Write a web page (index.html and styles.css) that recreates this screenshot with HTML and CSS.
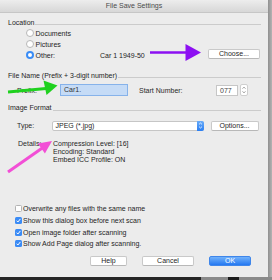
FILE: index.html
```html
<!DOCTYPE html>
<html>
<head>
<meta charset="utf-8">
<title>File Save Settings</title>
<link rel="stylesheet" href="styles.css">
</head>
<body>
<div class="screen">
  <div class="window">
    <div class="titlebar">File Save Settings</div>
    <div class="content">
      <section class="group">
        <div class="group-head"><span>Location</span><i class="rule"></i></div>
        <div class="radios">
          <div class="radio-row"><span class="radio"></span><span>Documents</span></div>
          <div class="radio-row"><span class="radio"></span><span>Pictures</span></div>
          <div class="radio-row"><span class="radio on"></span><span class="other-label">Other:</span><span class="path">Car 1 1949-50</span><button class="btn choose">Choose...</button></div>
        </div>
      </section>

      <section class="group filename">
        <div class="group-head"><span>File Name (Prefix + 3-digit number)</span><i class="rule"></i></div>
        <div class="prefix-row">
          <span class="field-label prefix-label">Prefix:</span>
          <span class="input prefix-input">Car1.</span>
          <span class="field-label start-label">Start Number:</span>
          <span class="input start-input">077</span>
          <span class="stepper"><svg width="6" height="10" viewBox="0 0 6 10"><path d="M1.6 3.6 L3 2.2 L4.4 3.6 M1.6 6.4 L3 7.8 L4.4 6.4" fill="none" stroke="#666" stroke-width="0.7"/></svg></span>
        </div>
      </section>

      <section class="group format">
        <div class="group-head"><span>Image Format</span><i class="rule"></i></div>
        <div class="type-row">
          <span class="field-label type-label">Type:</span>
          <span class="select"><span class="select-text">JPEG (*.jpg)</span><span class="select-arrows"><svg width="7" height="9" viewBox="0 0 7 9"><path d="M2 3.4 L3.5 2 L5 3.4 M2 5.6 L3.5 7 L5 5.6" fill="none" stroke="#fff" stroke-width="0.8"/></svg></span></span>
          <button class="btn options">Options...</button>
        </div>
        <div class="details-row">
          <span class="field-label details-label">Details:</span>
          <div class="details-text">
            <div>Compression Level: [16]</div>
            <div>Encoding: Standard</div>
            <div>Embed ICC Profile: ON</div>
          </div>
        </div>
      </section>

      <section class="checks">
        <div class="check-row"><span class="check"></span><span>Overwrite any files with the same name</span></div>
        <div class="check-row"><span class="check on"><svg width="7" height="7" viewBox="0 0 7 7"><path d="M1.6 3.7 L2.9 5 L5.4 1.9" fill="none" stroke="#fff" stroke-width="1"/></svg></span><span>Show this dialog box before next scan</span></div>
        <div class="check-row"><span class="check on"><svg width="7" height="7" viewBox="0 0 7 7"><path d="M1.6 3.7 L2.9 5 L5.4 1.9" fill="none" stroke="#fff" stroke-width="1"/></svg></span><span>Open image folder after scanning</span></div>
        <div class="check-row"><span class="check on"><svg width="7" height="7" viewBox="0 0 7 7"><path d="M1.6 3.7 L2.9 5 L5.4 1.9" fill="none" stroke="#fff" stroke-width="1"/></svg></span><span>Show Add Page dialog after scanning.</span></div>
      </section>

      <div class="buttons">
        <button class="btn help">Help</button>
        <button class="btn cancel">Cancel</button>
        <button class="btn ok">OK</button>
      </div>
    </div>

    <svg class="annotations" width="268" height="277" viewBox="0 0 268 277">
      <line x1="150" y1="52.5" x2="188" y2="52.5" stroke="#8d10f2" stroke-width="2.6"/>
      <polygon points="185.5,44 201,52.5 185.5,61" fill="#8d10f2"/>
      <line x1="8" y1="92" x2="46" y2="88.6" stroke="#1fd11f" stroke-width="3"/>
      <polygon points="43.5,80.5 57.5,85.5 46.5,95" fill="#1fd11f"/>
      <line x1="8" y1="172" x2="43" y2="147.5" stroke="#f24fd6" stroke-width="3"/>
      <polygon points="37.9,143.6 52,141 44.9,153.4" fill="#f24fd6"/>
    </svg>
  </div>
  <div class="shade-right"></div>
</div>
<div class="shade-bottom"></div>
</body>
</html>
```

FILE: styles.css
```css
html, body {
  margin: 0;
  padding: 0;
}
body {
  width: 272px;
  height: 280px;
  overflow: hidden;
  font-family: "Liberation Sans", Arial, sans-serif;
  font-size: 7px;
  color: #1e1e1e;
  background: #9c9c9c;
}
.screen {
  display: flex;
  height: 277px;
}
.window {
  position: relative;
  width: 268px;
  height: 277px;
  background: #ececec;
  flex: none;
}
.shade-right {
  flex: 1;
  background: linear-gradient(to right, #8f8f8f, #b4b4b4);
}
.shade-bottom {
  height: 3px;
  background: linear-gradient(to right, #262626 0, #262626 74%, #8a8a8a 74%, #8a8a8a 84%, #1c1c1c 84%, #1c1c1c 88%, #8a8a8a 88%);
}
.titlebar {
  height: 12px;
  line-height: 12px;
  text-align: center;
  color: #4b4b4b;
  background: linear-gradient(#ededed, #d7d7d7);
  border-bottom: 1px solid #c6c6c6;
}
.content {
  padding: 5.5px 7px 0 8px;
}
.group-head {
  display: flex;
  height: 8px;
  line-height: 8px;
  white-space: nowrap;
}
.rule {
  flex: 1;
  align-self: flex-end;
  margin: 0 0 1.5px 1px;
  border-bottom: 1px solid #cbcbcb;
}
.radios {
  margin-top: 1px;
  padding-left: 18px;
}
.radio-row {
  display: flex;
  align-items: center;
  height: 11px;
}
.radio {
  box-sizing: border-box;
  width: 8px;
  height: 8px;
  margin-right: 1.5px;
  border-radius: 50%;
  background: #fff;
  border: 1px solid #b7b7b7;
  flex: none;
}
.radio.on {
  border: 2.4px solid #3a8cf6;
  background: #fff;
}
.other-label {
  width: 64.5px;
}
.path {
  flex: 1;
}
.btn {
  box-sizing: border-box;
  height: 10px;
  padding: 0;
  font-family: inherit;
  font-size: 7px;
  line-height: 8px;
  color: #1e1e1e;
  background: #fff;
  border: 1px solid #c9c9c9;
  border-bottom-color: #b8b8b8;
  border-radius: 2px;
  text-align: center;
}
.choose {
  width: 52px;
  margin: -2.5px 1px 0 0;
}
.filename {
  margin-top: 11px;
}
.prefix-row {
  display: flex;
  align-items: center;
  height: 12px;
  margin-top: 4.5px;
  padding-left: 9px;
}
.field-label {
  color: #2a2a2a;
}
.prefix-label {
  width: 43px;
}
.input {
  box-sizing: border-box;
  height: 12px;
  line-height: 10px;
  padding-left: 3px;
  border: 1px solid #c6c6c6;
  background: #fff;
}
.prefix-input {
  width: 68px;
  background: #c5dbf6;
  border-color: #86b2ea;
  color: #333;
}
.start-label {
  width: 77px;
  margin-left: 11px;
}
.start-input {
  width: 22px;
  height: 11px;
  line-height: 9px;
  color: #444;
}
.stepper {
  display: flex;
  margin-left: 2px;
  width: 6px;
  height: 10px;
  border: 0.5px solid #cfcfcf;
  border-radius: 2px;
  background: #fff;
}
.format {
  margin-top: 8.3px;
}
.type-row {
  display: flex;
  align-items: center;
  height: 11px;
  margin-top: 8px;
  padding-left: 9px;
}
.type-label {
  width: 34.5px;
}
.select {
  box-sizing: border-box;
  display: flex;
  width: 152px;
  height: 10.5px;
  border: 1px solid #c6c6c6;
  border-radius: 2px;
  background: #fff;
}
.select-text {
  flex: 1;
  padding-left: 3px;
  line-height: 8.5px;
}
.select-arrows {
  display: flex;
  align-items: center;
  justify-content: center;
  width: 7px;
  margin: -1px -1px -1px 0;
  border-radius: 0 2px 2px 0;
  background: linear-gradient(#69acfa, #2a7ef2);
}
.options {
  width: 48px;
  height: 10.5px;
  margin-left: 7px;
}
.details-row {
  display: flex;
  margin-top: 8.7px;
  padding-left: 10px;
  line-height: 8px;
}
.details-label {
  width: 35px;
}
.checks {
  margin-top: 39px;
  padding-left: 6.5px;
}
.check-row {
  display: flex;
  align-items: center;
  height: 11.7px;
}
.check {
  box-sizing: border-box;
  display: flex;
  width: 7px;
  height: 7px;
  margin-right: 1.5px;
  border: 1px solid #b3b3b3;
  border-radius: 1.5px;
  background: #fff;
  flex: none;
}
.check.on {
  border: none;
  background: #3b8bf5;
}
.buttons {
  display: flex;
  justify-content: flex-end;
  gap: 15px;
  margin-top: 6.2px;
  padding-right: 10px;
}
.help {
  width: 37px;
}
.cancel {
  width: 52px;
}
.ok {
  width: 42px;
  color: #fff;
  background: linear-gradient(#72b2fb, #2478f1);
  border-color: #3f86ea;
}
.annotations {
  position: absolute;
  left: 0;
  top: 0;
  pointer-events: none;
}
```
